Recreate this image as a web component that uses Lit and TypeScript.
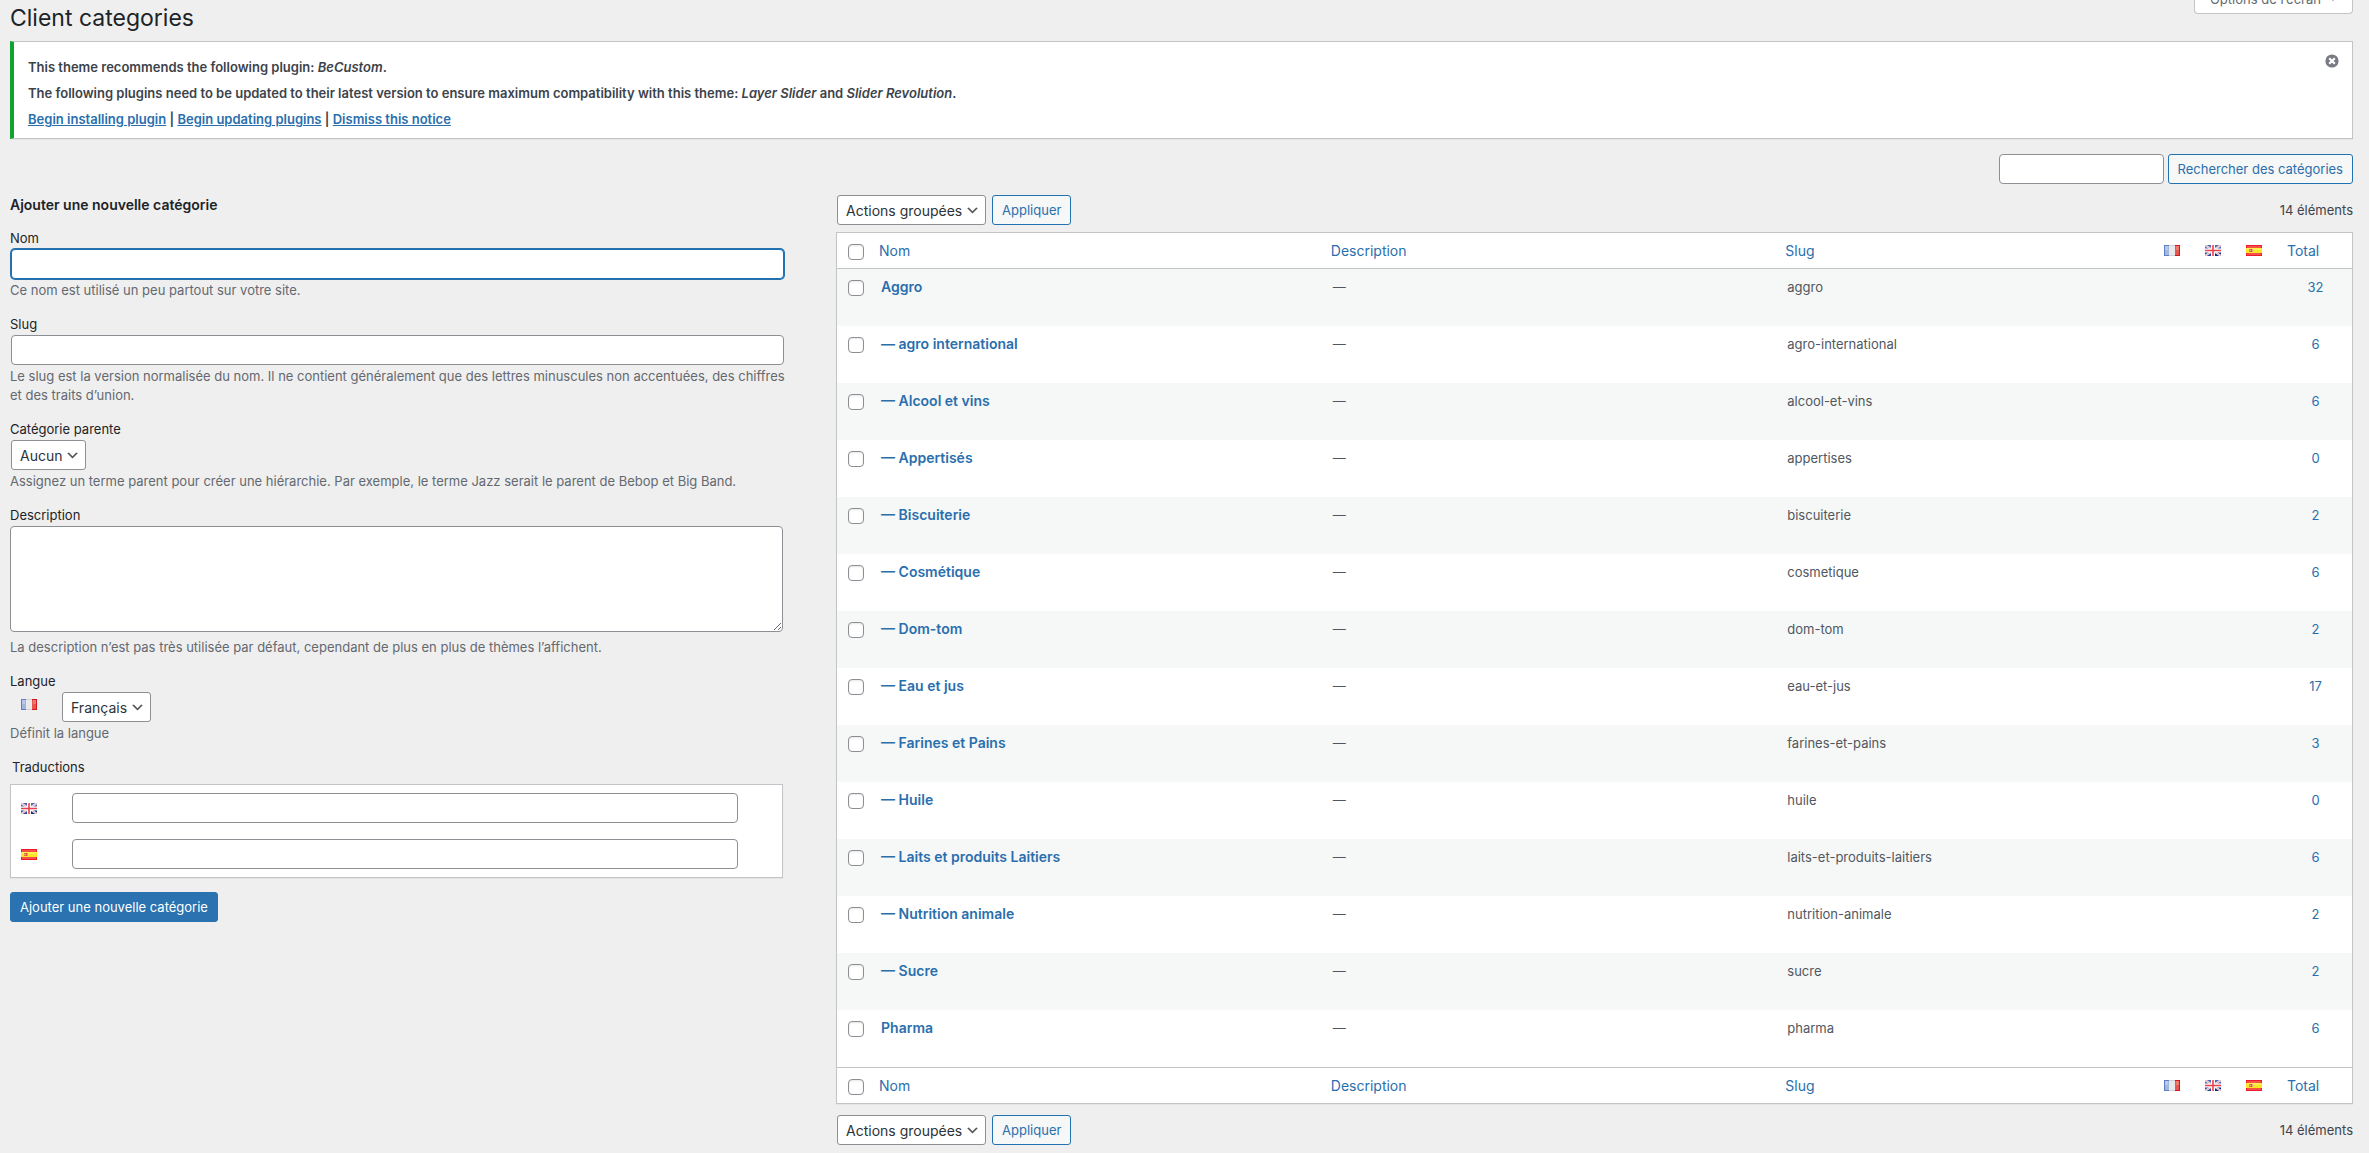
import { LitElement, html, css, svg, nothing, TemplateResult } from "lit";
import { customElement, property } from "lit/decorators.js";

type Lang = "fr" | "gb" | "es";

interface Category {
  name: string;
  depth: number;
  slug: string;
  total: number;
}

const LANG_LABELS: Record<Lang, string> = { fr: "Français", gb: "English", es: "Español" };

const CATEGORIES: Category[] = [
  { name: "Aggro", depth: 0, slug: "aggro", total: 32 },
  { name: "agro international", depth: 1, slug: "agro-international", total: 6 },
  { name: "Alcool et vins", depth: 1, slug: "alcool-et-vins", total: 6 },
  { name: "Appertisés", depth: 1, slug: "appertises", total: 0 },
  { name: "Biscuiterie", depth: 1, slug: "biscuiterie", total: 2 },
  { name: "Cosmétique", depth: 1, slug: "cosmetique", total: 6 },
  { name: "Dom-tom", depth: 1, slug: "dom-tom", total: 2 },
  { name: "Eau et jus", depth: 1, slug: "eau-et-jus", total: 17 },
  { name: "Farines et Pains", depth: 1, slug: "farines-et-pains", total: 3 },
  { name: "Huile", depth: 1, slug: "huile", total: 0 },
  { name: "Laits et produits Laitiers", depth: 1, slug: "laits-et-produits-laitiers", total: 6 },
  { name: "Nutrition animale", depth: 1, slug: "nutrition-animale", total: 2 },
  { name: "Sucre", depth: 1, slug: "sucre", total: 2 },
  { name: "Pharma", depth: 0, slug: "pharma", total: 6 },
];

const base = css`
  *,
  *::before,
  *::after {
    box-sizing: border-box;
  }
  a {
    color: #2a6fad;
    text-decoration: none;
  }
  button,
  input,
  select,
  textarea {
    font-family: inherit;
    margin: 0;
  }
  .button {
    height: 30px;
    padding: 0 9px;
    border: 1px solid #2271b1;
    border-radius: 3px;
    background: #f6f7f7;
    color: #2a6fad;
    font-size: 13px;
    line-height: 28px;
    white-space: nowrap;
    cursor: pointer;
  }
  .button.primary {
    border-color: #2a72b0;
    background: #2a72b0;
    color: #fff;
  }
  .input {
    height: 30px;
    padding: 0 8px;
    border: 1px solid #8c8f94;
    border-radius: 4px;
    background: #fff;
    color: #2c3338;
    font-size: 14px;
  }
`;

/* Small language flag, 16 x 11 */
@customElement("lang-flag")
export class LangFlag extends LitElement {
  static styles = css`
    :host {
      display: block;
      width: 16px;
      height: 11px;
    }
    svg {
      display: block;
      width: 16px;
      height: 11px;
    }
  `;
  @property() lang: Lang = "fr";

  private art(): TemplateResult {
    if (this.lang === "fr") {
      return svg`
        <rect width="5" height="11" fill="#a3b6de"/>
        <rect x="1" y="1" width="3" height="4" fill="#b9c8e8"/>
        <rect x="5" width="6" height="11" fill="#e9e9eb"/>
        <rect x="11" width="5" height="11" fill="#e8564e"/>
        <rect x="12" y="1" width="3" height="4" fill="#ee7a70"/>
        <path d="M.5 0V11M0 .5H5M0 10.5H5" stroke="#5f7fc4" fill="none"/>
        <path d="M5 .5H11M5 10.5H11" stroke="#d0d0d6" fill="none"/>
        <path d="M15.5 0V11M11 .5H16M11 10.5H16" stroke="#d3161c" fill="none"/>`;
    }
    if (this.lang === "gb") {
      return svg`
        <rect width="16" height="11" fill="#4f68b2"/>
        <path d="M9 7H16V11H9Z" fill="#122c78"/>
        <path d="M0 7H7V11H0Z" fill="#2c4796"/>
        <path d="M0 0L16 11M16 0L0 11" stroke="#f2f2f8" stroke-width="2"/>
        <path d="M0 0L16 11M16 0L0 11" stroke="#e88a94" stroke-width=".7"/>
        <path d="M8 0V11M0 5.5H16" stroke="#fff" stroke-width="4"/>
        <path d="M8 0V11M0 5.5H16" stroke="#e8404c" stroke-width="1.6"/>`;
    }
    return svg`
      <rect width="16" height="11" fill="#ee1c24"/>
      <rect x="1" y="1" width="14" height="2" fill="#f4504a"/>
      <rect x="1" y="8" width="14" height="2" fill="#f4504a"/>
      <rect y="3" width="16" height="5" fill="#fbe526"/>
      <rect x="1" y="3" width="14" height="2" fill="#fff04e"/>
      <rect x="3" y="4" width="1" height="3" fill="#e08a4a"/>
      <rect x="4" y="4" width="2" height="3" fill="#d9583a"/>
      <rect x="4" y="5" width="1" height="1" fill="#f2c9a8"/>
      <rect x="6" y="4" width="1" height="3" fill="#e0a860"/>`;
  }

  render() {
    return html`<svg viewBox="0 0 16 11" role="img" aria-label=${LANG_LABELS[this.lang]}>${this.art()}</svg>`;
  }
}

@customElement("select-box")
export class SelectBox extends LitElement {
  static styles = [
    base,
    css`
      :host {
        display: inline-flex;
        position: relative;
      }
      .select {
        appearance: none;
        height: 30px;
        padding: 0 22px 0 8px;
        border: 1px solid #8c8f94;
        border-radius: 3px;
        background: #fff;
        color: #2c3338;
        font-size: 14px;
        cursor: pointer;
      }
      .chevron {
        position: absolute;
        right: 6px;
        top: 8px;
        width: 15px;
        height: 15px;
        pointer-events: none;
      }
    `,
  ];
  @property() value = "";
  @property() label = "";

  render() {
    return html`
      <select class="select" aria-label=${this.label}>
        <option>${this.value}</option>
      </select>
      <svg class="chevron" viewBox="0 0 20 20" aria-hidden="true">
        <path d="M5 6l5 5 5-5 2 1-7 7-7-7 2-1z" fill="#555" />
      </svg>
    `;
  }
}

@customElement("plugin-notice")
export class PluginNotice extends LitElement {
  static styles = [
    base,
    css`
      :host {
        display: block;
      }
      .notice {
        position: relative;
        display: flex;
        flex-direction: column;
        gap: 7px;
        padding: 16px 38px 9px 14px;
        border: 1px solid #c3c4c7;
        border-left: 4px solid #11a332;
        background: #fff;
        box-shadow: 0 1px 1px rgba(0, 0, 0, 0.04);
        color: #3c434a;
        font-size: 13px;
        font-weight: 600;
        line-height: 19px;
      }
      .line {
        margin: 0;
      }
      .line a {
        text-decoration: underline;
      }
      .dismiss {
        position: absolute;
        top: 8px;
        right: 9px;
        width: 22px;
        height: 22px;
        padding: 4px;
        border: 0;
        background: none;
        cursor: pointer;
      }
      .dismiss svg {
        display: block;
        width: 14px;
        height: 14px;
      }
    `,
  ];

  render() {
    return html`
      <div class="notice">
        <p class="line">This theme recommends the following plugin: <em>BeCustom</em>.</p>
        <p class="line">
          The following plugins need to be updated to their latest version to ensure maximum compatibility with this
          theme: <em>Layer Slider</em> and <em>Slider Revolution</em>.
        </p>
        <p class="line">
          <a href="#install">Begin installing plugin</a> | <a href="#update">Begin updating plugins</a> |
          <a href="#dismiss">Dismiss this notice</a>
        </p>
        <button class="dismiss" type="button" aria-label="Dismiss">
          <svg viewBox="0 0 14 14" aria-hidden="true">
            <circle cx="7" cy="7" r="6.6" fill="#787c82" />
            <path d="M4.2 4.2L9.8 9.8M9.8 4.2L4.2 9.8" stroke="#fff" stroke-width="2.2" />
          </svg>
        </button>
      </div>
    `;
  }
}

@customElement("category-form")
export class CategoryForm extends LitElement {
  static styles = [
    base,
    css`
      :host {
        display: block;
        min-width: 0;
      }
      .heading {
        margin: 0 0 13px;
        color: #1d2327;
        font-size: 14px;
        font-weight: 600;
        line-height: 20px;
      }
      .form {
        display: flex;
        flex-direction: column;
        gap: 14px;
      }
      .field {
        display: flex;
        flex-direction: column;
        align-items: flex-start;
      }
      .label {
        margin-bottom: 1px;
        color: #1d2327;
        font-size: 13px;
        line-height: 20px;
      }
      .field > .input {
        align-self: stretch;
        margin: 0 -1px 0 1px;
      }
      .field > .input.active {
        border-color: #2271b1;
        box-shadow: 0 0 0 1px #2271b1;
        outline: none;
      }
      .field > select-box {
        margin-left: 1px;
      }
      .textarea {
        display: block;
        width: 100%;
        height: 106px;
        margin-bottom: 4px;
        border: 1px solid #8c8f94;
        border-radius: 4px;
        background: #fff;
        font-size: 14px;
        resize: vertical;
      }
      .help {
        margin: 2px -10px 0 0;
        color: #646970;
        font-size: 13px;
        line-height: 19px;
      }
      .language {
        display: flex;
        gap: 25px;
        padding-left: 11px;
      }
      .language lang-flag {
        margin-top: 7px;
      }
      .translations {
        margin: 0;
        padding: 0;
        border: 0;
      }
      .legend {
        padding: 0 2px;
        color: #1d2327;
        font-size: 13px;
        line-height: 20px;
      }
      .box {
        display: flex;
        flex-direction: column;
        gap: 16px;
        margin-top: 7px;
        padding: 8px 44px 8px 10px;
        border: 1px solid #c3c4c7;
        background: #fff;
        box-shadow: 0 1px 1px rgba(0, 0, 0, 0.04);
      }
      .row {
        display: flex;
        align-items: center;
        gap: 35px;
      }
      .row .input {
        flex: 1;
        min-width: 0;
      }
      .form > .button {
        align-self: flex-start;
      }
    `,
  ];

  render() {
    return html`
      <h2 class="heading">Ajouter une nouvelle catégorie</h2>
      <form class="form" @submit=${(e: Event) => e.preventDefault()}>
        <div class="field">
          <label class="label" for="name">Nom</label>
          <input class="input active" id="name" type="text" />
          <p class="help">Ce nom est utilisé un peu partout sur votre site.</p>
        </div>
        <div class="field">
          <label class="label" for="slug">Slug</label>
          <input class="input" id="slug" type="text" />
          <p class="help">
            Le slug est la version normalisée du nom. Il ne contient généralement que des lettres minuscules non
            accentuées, des chiffres et des traits d’union.
          </p>
        </div>
        <div class="field">
          <label class="label">Catégorie parente</label>
          <select-box value="Aucun" label="Catégorie parente"></select-box>
          <p class="help">
            Assignez un terme parent pour créer une hiérarchie. Par exemple, le terme Jazz serait le parent de Bebop et
            Big Band.
          </p>
        </div>
        <div class="field">
          <label class="label" for="description">Description</label>
          <textarea class="textarea" id="description"></textarea>
          <p class="help">
            La description n’est pas très utilisée par défaut, cependant de plus en plus de thèmes l’affichent.
          </p>
        </div>
        <div class="field">
          <label class="label">Langue</label>
          <div class="language">
            <lang-flag lang="fr"></lang-flag>
            <select-box value="Français" label="Langue"></select-box>
          </div>
          <p class="help">Définit la langue</p>
        </div>
        <fieldset class="translations">
          <legend class="legend">Traductions</legend>
          <div class="box">
            ${(["gb", "es"] as Lang[]).map(
              (lang) => html`
                <div class="row">
                  <lang-flag lang=${lang}></lang-flag>
                  <input class="input" type="text" aria-label=${LANG_LABELS[lang]} />
                </div>
              `
            )}
          </div>
        </fieldset>
        <button class="button primary" type="submit">Ajouter une nouvelle catégorie</button>
      </form>
    `;
  }
}

@customElement("category-table")
export class CategoryTable extends LitElement {
  static styles = [
    base,
    css`
      :host {
        display: block;
      }
      .toolbar {
        display: flex;
        align-items: center;
        gap: 6px;
        padding-left: 1px;
      }
      .count {
        margin-left: auto;
        color: #3c434a;
        font-size: 13px;
        line-height: 20px;
      }
      .table {
        width: 100%;
        margin: 7px 0 11px;
        table-layout: fixed;
        border: 1px solid #c3c4c7;
        border-spacing: 0;
        background: #fff;
        box-shadow: 0 1px 1px rgba(0, 0, 0, 0.04);
        font-size: 13px;
        line-height: 20px;
      }
      .check {
        width: 34px;
      }
      .desc {
        width: 30%;
      }
      .slug {
        width: 25%;
      }
      .lang {
        width: 41px;
      }
      .num {
        width: 73px;
      }
      .head {
        height: 36px;
        padding: 0 8px;
        font-size: 14px;
        font-weight: 400;
        text-align: left;
      }
      thead .head {
        border-bottom: 1px solid #c3c4c7;
      }
      tfoot .head {
        border-top: 1px solid #c3c4c7;
      }
      .cell {
        height: 57px;
        padding: 8px 10px;
        color: #50575e;
        vertical-align: top;
      }
      .name {
        font-size: 14px;
        font-weight: 600;
      }
      .total {
        text-align: center;
      }
      .cell.pick,
      .head.pick {
        padding: 11px 0 0 11px;
        vertical-align: top;
        line-height: 0;
      }
      .stripe {
        background: #f6f7f7;
      }
      .box {
        appearance: none;
        display: block;
        width: 16px;
        height: 16px;
        border: 1px solid #8c8f94;
        border-radius: 4px;
        background: #fff;
        box-shadow: inset 0 1px 2px rgba(0, 0, 0, 0.1);
      }
    `,
  ];

  private toolbar() {
    return html`
      <div class="toolbar">
        <select-box value="Actions groupées" label="Actions groupées"></select-box>
        <button class="button" type="button">Appliquer</button>
        <span class="count">14 éléments</span>
      </div>
    `;
  }

  private headings() {
    return html`
      <tr>
        <td class="head check pick"><input class="box" type="checkbox" aria-label="Tout sélectionner" /></td>
        <th class="head" scope="col"><a href="#name">Nom</a></th>
        <th class="head desc" scope="col"><a href="#description">Description</a></th>
        <th class="head slug" scope="col"><a href="#slug">Slug</a></th>
        ${(["fr", "gb", "es"] as Lang[]).map(
          (lang) => html`<th class="head lang" scope="col"><lang-flag lang=${lang}></lang-flag></th>`
        )}
        <th class="head num" scope="col"><a href="#total">Total</a></th>
      </tr>
    `;
  }

  render() {
    return html`
      ${this.toolbar()}
      <table class="table">
        <thead>
          ${this.headings()}
        </thead>
        <tbody>
          ${CATEGORIES.map(
            (c, i) => html`
              <tr class=${i % 2 === 0 ? "stripe" : nothing}>
                <td class="cell pick"><input class="box" type="checkbox" aria-label=${c.name} /></td>
                <td class="cell name"><a href="#${c.slug}">${"— ".repeat(c.depth)}${c.name}</a></td>
                <td class="cell">—</td>
                <td class="cell">${c.slug}</td>
                <td class="cell"></td>
                <td class="cell"></td>
                <td class="cell"></td>
                <td class="cell total"><a href="#${c.slug}">${c.total}</a></td>
              </tr>
            `
          )}
        </tbody>
        <tfoot>
          ${this.headings()}
        </tfoot>
      </table>
      ${this.toolbar()}
    `;
  }
}

@customElement("app-root")
export class AppRoot extends LitElement {
  static styles = [
    base,
    css`
      :host {
        display: block;
        min-height: 100vh;
        background: #efefef;
        color: #3c434a;
        font-family: Inter, "Liberation Sans", sans-serif;
        font-size: 13px;
      }
      .wrap {
        position: relative;
        padding: 4px 16px 8px 10px;
        overflow: hidden;
      }
      .options {
        position: absolute;
        top: -16px;
        right: 16px;
        display: flex;
        align-items: center;
        gap: 8px;
        height: 30px;
        padding: 0 15px;
        border: 1px solid #c3c4c7;
        border-top: 0;
        border-radius: 0 0 4px 4px;
        background: #fff;
        color: #646970;
        font-size: 13px;
        cursor: pointer;
      }
      .arrow {
        display: block;
        width: 8px;
        height: 5px;
      }
      .title {
        margin: 0 0 8px;
        color: #1d2327;
        font-size: 23px;
        font-weight: 400;
        line-height: 29px;
      }
      .search {
        display: flex;
        justify-content: flex-end;
        gap: 4px;
        margin: 15px 0 11px;
      }
      .search .input {
        width: 165px;
      }
      .columns {
        display: grid;
        grid-template-columns: 33fr 2fr 65fr;
      }
      .list {
        grid-column: 3;
        padding-left: 6px;
        min-width: 0;
      }
    `,
  ];

  render() {
    return html`
      <main class="wrap">
        <button class="options" type="button">
          Options de l’écran
          <svg class="arrow" viewBox="0 0 8 5" aria-hidden="true"><path d="M0 0H8L4 5Z" fill="#646970" /></svg>
        </button>
        <h1 class="title">Client categories</h1>
        <plugin-notice></plugin-notice>
        <form class="search" role="search" @submit=${(e: Event) => e.preventDefault()}>
          <input class="input" type="search" aria-label="Rechercher des catégories" />
          <button class="button" type="submit">Rechercher des catégories</button>
        </form>
        <div class="columns">
          <category-form></category-form>
          <category-table class="list"></category-table>
        </div>
      </main>
    `;
  }
}
